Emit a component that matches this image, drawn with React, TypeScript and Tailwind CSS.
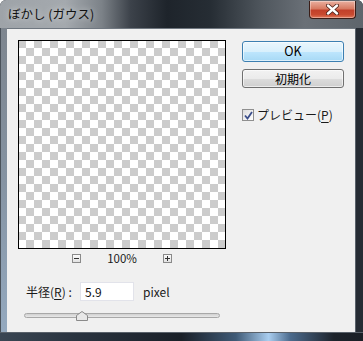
import { useState } from 'react';

const ui = { fontFamily: '"Noto Sans CJK JP", "Liberation Sans", sans-serif' };

function CloseButton() {
  return (
    <div className="mt-px h-[18px] w-[47px] rounded-b-[4px] border border-t-0 border-[#3a1d17] bg-[linear-gradient(#eab0a0_0%,#d77a62_45%,#c2402a_55%,#c94a30_80%,#e0785a_100%)] shadow-[inset_0_0_0_1px_rgba(255,255,255,0.35)] flex items-center justify-center">
      <svg width="13" height="11" viewBox="0 0 13 11">
        <path d="M2 1.5 L11 9.5 M11 1.5 L2 9.5" stroke="#4a2018" strokeWidth="4" strokeLinecap="round" />
        <path d="M2 1.5 L11 9.5 M11 1.5 L2 9.5" stroke="#ffffff" strokeWidth="2.4" strokeLinecap="round" />
      </svg>
    </div>
  );
}

function ZoomBox({ plus }: { plus?: boolean }) {
  return (
    <div className="w-[9px] h-[9px] border border-[#8a8a8a] bg-[linear-gradient(#fafafa,#e2e2e2)] flex items-center justify-center">
      <svg width="7" height="7" viewBox="0 0 7 7">
        <path d="M1 3.5 H6" stroke="#333" strokeWidth="1" />
        {plus && <path d="M3.5 1 V6" stroke="#333" strokeWidth="1" />}
      </svg>
    </div>
  );
}

export default function App() {
  const [preview, setPreview] = useState(true);
  const [radius, setRadius] = useState('5.9');

  return (
    <div className="w-[363px] h-[341px] flex flex-col overflow-hidden rounded-t-[6px] bg-[#2a3038]" style={ui}>
      {/* Title bar */}
      <div className="h-[28px] flex items-start justify-between pr-[7px] bg-[linear-gradient(90deg,#9ea3a8_0%,#a4a9ae_18%,#7c8288_28%,#3c424a_36%,#1e242b_46%,#262d34_58%,#4f565d_72%,#6a7077_84%,#5e656c_100%)]">
        <div className="pl-[8px] pt-[5px] text-[12.5px] leading-[18px] text-[#111] [text-shadow:0_0_6px_rgba(255,255,255,0.8)]">
          ぼかし (ガウス)
        </div>
        <CloseButton />
      </div>

      <div className="flex flex-1">
        {/* left frame */}
        <div className="w-[7px] bg-[linear-gradient(#7d858e,#8593a2_50%,#94a9bf_100%)] border-l border-[#4a525a]" />

        {/* Client area */}
        <div className="w-[348px] h-[304px] bg-[#f0f0f0] border-t border-[#6f7780] flex text-[12px] text-[#1a1a1a]">
          <div className="ml-[11px] mt-[11px] flex flex-col w-[208px]">
            <div className="w-[208px] h-[209px] border border-black bg-origin-border bg-[repeating-conic-gradient(#ffffff_0_25%,#cccccc_0_50%)] bg-[length:16px_16px]" />

            <div className="h-[19px] flex items-center justify-center gap-[26px]">
              <ZoomBox />
              <span className="w-[30px] text-center text-[11.5px] leading-none">100%</span>
              <ZoomBox plus />
            </div>

            <div className="mt-[14px] ml-[8px] flex items-center h-[19px]">
              <span className="w-[54px]">
                半径(<span className="underline underline-offset-2">R</span>) :
              </span>
              <input
                value={radius}
                onChange={(e) => setRadius(e.target.value)}
                className="w-[54px] h-[19px] px-[4px] border border-[#e2e3ea] bg-white text-[12px] text-[#111] outline-none"
              />
              <span className="ml-[9px]">pixel</span>
            </div>

            <div className="mt-[12px] ml-[6px] relative w-[196px] h-[5px] rounded-full border border-[#a8a8a8] bg-[linear-gradient(#d0d0d0,#e8e8e8)]">
              <svg className="absolute left-[51px] -top-[3px]" width="12" height="10" viewBox="0 0 12 10">
                <path d="M0.5 9.5 V4.5 L6 0.5 L11.5 4.5 V9.5 Z" fill="#e8e8e8" stroke="#8a8a8a" />
              </svg>
            </div>
          </div>

          <div className="ml-[16px] mt-[12px] flex flex-col w-[102px]">
            <button className="h-[21px] rounded-[3px] border border-[#3c7fb1] bg-[linear-gradient(#eaf6fd_0%,#d9f0fc_50%,#bee6fd_51%,#a7d9f5_100%)] shadow-[inset_0_0_0_1px_rgba(255,255,255,0.6)] text-[12.5px] leading-none text-black">
              OK
            </button>
            <button className="mt-[7px] h-[19px] rounded-[3px] border border-[#707070] bg-[linear-gradient(#f2f2f2_0%,#ebebeb_50%,#dddddd_51%,#cfcfcf_100%)] shadow-[inset_0_0_0_1px_rgba(255,255,255,0.6)] text-[12px] leading-none text-black">
              初期化
            </button>
            <label className="mt-[18px] flex items-center gap-[3px] cursor-default">
              <span
                onClick={() => setPreview(!preview)}
                className="w-[12px] h-[12px] border border-[#8f8f8f] bg-[linear-gradient(135deg,#dcdcdc,#ffffff)] flex items-center justify-center"
              >
                {preview && (
                  <svg width="9" height="9" viewBox="0 0 9 9">
                    <path d="M1 4.5 L3.5 7.5 L8 1" fill="none" stroke="#3b4e8a" strokeWidth="1.8" />
                  </svg>
                )}
              </span>
              <span className="text-[12px]">
                プレビュー(<span className="underline underline-offset-2">P</span>)
              </span>
            </label>
          </div>
        </div>

        {/* right frame */}
        <div className="w-[8px] bg-[#262c34] border-l border-[#59616a]" />
      </div>

      {/* bottom frame */}
      <div className="h-[9px] border-t border-[#59616a] bg-[linear-gradient(90deg,#3a4653_0%,#2a3440_20%,#1a2028_50%,#3f5a76_65%,#a9cdef_74%,#4b6a8c_80%,#1d232b_92%,#1a1f26_100%)]" />
    </div>
  );
}
